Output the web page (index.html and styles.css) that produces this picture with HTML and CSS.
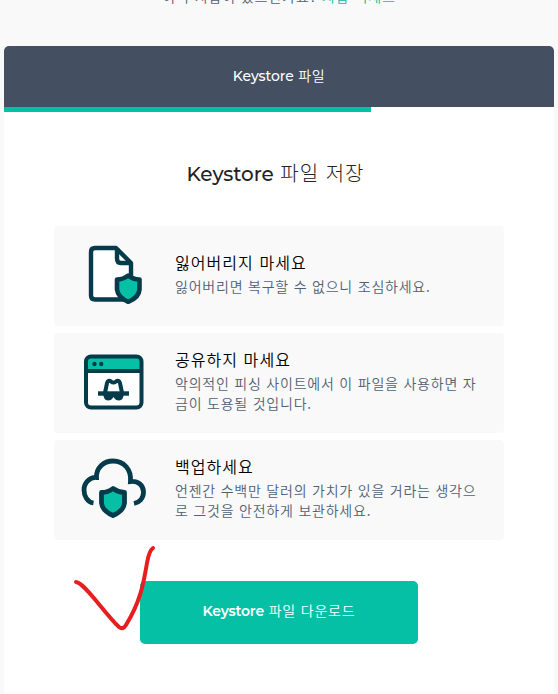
FILE: index.html
```
<!DOCTYPE html>
<html lang="ko">
<head>
    <meta charset="UTF-8">
    <meta name="viewport" content="width=device-width, initial-scale=1.0">
    <title>Keystore 파일</title>
    <link rel="stylesheet" href="styles.css">
</head>
<body>
    <p class="access">이미 지갑이 있으신가요? <a href="#">지갑 액세스</a></p>
    <div class="container">
        <div class="tab"><span class="latin">Keystore</span> 파일</div>
        <div class="progress"><div class="progress-bar"></div></div>
        <div class="content">
            <h1><span class="latin">Keystore</span> 파일 저장</h1>
            <div class="card">
                <svg class="icon" width="90" height="80" viewBox="0 0 90 80">
                    <path d="M25 13H46L61 28V64.500H25Q21 64.500 21 60.500V17Q21 13 25 13Z" fill="#fff" stroke="#053b4b" stroke-width="4.400" stroke-linejoin="round"/>
                    <path d="M47 13V23.500Q47 28 51 28H61" fill="none" stroke="#053b4b" stroke-width="4.400"/>
                    <path d="M58.200 40.500Q63 44.500 69.500 44.500V54.500Q69 62.500 58.200 66.800Q48 62.500 47 54.500V44.500Q53 44.500 58.200 40.500Z" fill="#05c0a5" stroke="#053b4b" stroke-width="4.600" stroke-linejoin="round"/>
                </svg>
                <div class="text">
                    <h2>잃어버리지 마세요</h2>
                    <p>잃어버리면 복구할 수 없으니 조심하세요.</p>
                </div>
            </div>
            <div class="card">
                <svg class="icon" width="90" height="80" viewBox="0 0 90 80">
                    <rect x="16" y="14.500" width="55.500" height="51" rx="5" fill="#fff"/>
                    <path d="M16 28V19.500Q16 14.500 21 14.500H66.500Q71.500 14.500 71.500 19.500V28Z" fill="#05c0a5"/>
                    <rect x="16" y="14.500" width="55.500" height="51" rx="5" fill="none" stroke="#053b4b" stroke-width="4"/>
                    <path d="M16 29H71" stroke="#053b4b" stroke-width="4"/>
                    <circle cx="24.500" cy="22" r="2.200" fill="#053b4b"/>
                    <circle cx="31.200" cy="22" r="2.200" fill="#053b4b"/>
                    <path d="M28 51.500H59" stroke="#053b4b" stroke-width="4.400"/>
                    <path d="M35 51L37 41Q38 37.500 41 39.500Q43.500 41.500 46 39.500Q49 37.500 50 41L52 51" fill="none" stroke="#053b4b" stroke-width="4"/>
                    <path d="M33 51H54Q53.500 58.500 49 58.500Q45.500 58.500 43.500 55Q41.500 58.500 38 58.500Q33.500 58.500 33 51Z" fill="#053b4b"/>
                </svg>
                <div class="text">
                    <h2>공유하지 마세요</h2>
                    <p>악의적인 피싱 사이트에서 이 파일을 사용하면 자<br>금이 도용될 것입니다.</p>
                </div>
            </div>
            <div class="card">
                <svg class="icon" width="90" height="80" viewBox="0 0 90 80">
                    <path d="M23.500 54C17 53 14 46.500 14 41C14 33.500 20 28 26.500 28.500C26 19 33.500 12 43 12C54 12 61.500 20.500 60.500 32.500C68 31.500 73.500 36.500 73.500 43C73.500 49.500 69 53.500 64 54.500" fill="none" stroke="#053b4b" stroke-width="4.800"/>
                    <path d="M43 39.500Q48.500 43.500 54.500 43.500V54Q53.500 62 43 66.500Q32.500 62 31.500 54V43.500Q38 43.500 43 39.500Z" fill="#05c0a5" stroke="#053b4b" stroke-width="4.800" stroke-linejoin="round"/>
                </svg>
                <div class="text">
                    <h2>백업하세요</h2>
                    <p>언젠간 수백만 달러의 가치가 있을 거라는 생각으<br>로 그것을 안전하게 보관하세요.</p>
                </div>
            </div>
            <div class="download">
                <button class="button"><span class="latin">Keystore</span> 파일 다운로드</button>
                <svg class="check" width="84" height="88" viewBox="0 0 84 88">
                    <path d="M4 37C13 38 32 68 47 82Q51 85 54 80C70 54 72 34 75 18Q77 6 81 3" fill="none" stroke="#e71d20" stroke-width="4" stroke-linecap="round" stroke-linejoin="round"/>
                </svg>
            </div>
        </div>
    </div>
</body>
</html>
```

FILE: styles.css
```
* {
    box-sizing: border-box;
}

body {
    margin: 0;
    height: 694px;
    overflow: hidden;
    background: #f9f9f9;
    color: #222;
    font-family: "Noto Sans CJK KR", sans-serif;
    font-weight: 350;
}

.latin {
    font-family: "Montserrat", "Inter", sans-serif;
    letter-spacing: 0;
}

.access {
    margin: -14px 0 0;
    height: 60px;
    text-align: center;
    font-size: 14px;
    line-height: 20px;
    color: #506175;
    letter-spacing: 0.9px;
}

.access a {
    color: #05c0a5;
    text-decoration: none;
}

.container {
    width: 550px;
    height: 648px;
    margin-left: 4px;
    background: #fff;
    border-bottom: 3px solid #fcfcfc;
    border-radius: 5px 5px 0 0;
}

.tab {
    height: 61px;
    line-height: 58px;
    background: #444f61;
    border-radius: 5px 5px 0 0;
    color: #fff;
    font-size: 14px;
    text-align: center;
    letter-spacing: 0.6px;
}

.tab .latin {
    font-weight: 500;
    letter-spacing: -0.1px;
}

.progress-bar {
    width: 367px;
    height: 5px;
    background: #05c0a5;
}

.content {
    padding: 46px 50px 0;
}

h1 {
    margin: 0 0 37px;
    padding-right: 7px;
    font-size: 20px;
    font-weight: 300;
    line-height: 30px;
    text-align: center;
    letter-spacing: 1px;
}

h1 .latin {
    font-weight: 500;
    letter-spacing: -0.1px;
}

.card {
    display: flex;
    align-items: center;
    height: 100px;
    margin-bottom: 7px;
    background: #f9f9f9;
    border-radius: 4px;
}

.icon {
    flex: none;
    margin: 0 15px 2px 16px;
}

.text {
    padding-bottom: 5px;
    white-space: nowrap;
}

h2 {
    margin: 0 0 4px;
    font-size: 16px;
    font-weight: 350;
    line-height: 20px;
    letter-spacing: 1.05px;
    color: #000;
}

.text p {
    margin: 0;
    font-size: 14px;
    line-height: 20px;
    letter-spacing: 0.78px;
    color: #506175;
}

.download {
    position: relative;
    display: flex;
    justify-content: center;
    padding-top: 34px;
}

.button {
    width: 278px;
    height: 63px;
    padding: 0 0 5px;
    border: 0;
    border-radius: 5px;
    background: #05c0a5;
    color: #fff;
    font: inherit;
    font-size: 14px;
    letter-spacing: 0.8px;
}

.button .latin {
    font-weight: 600;
    letter-spacing: -0.2px;
}

/* hand drawn mark next to the button */
.check {
    position: absolute;
    left: 18px;
    top: -2px;
}
```
